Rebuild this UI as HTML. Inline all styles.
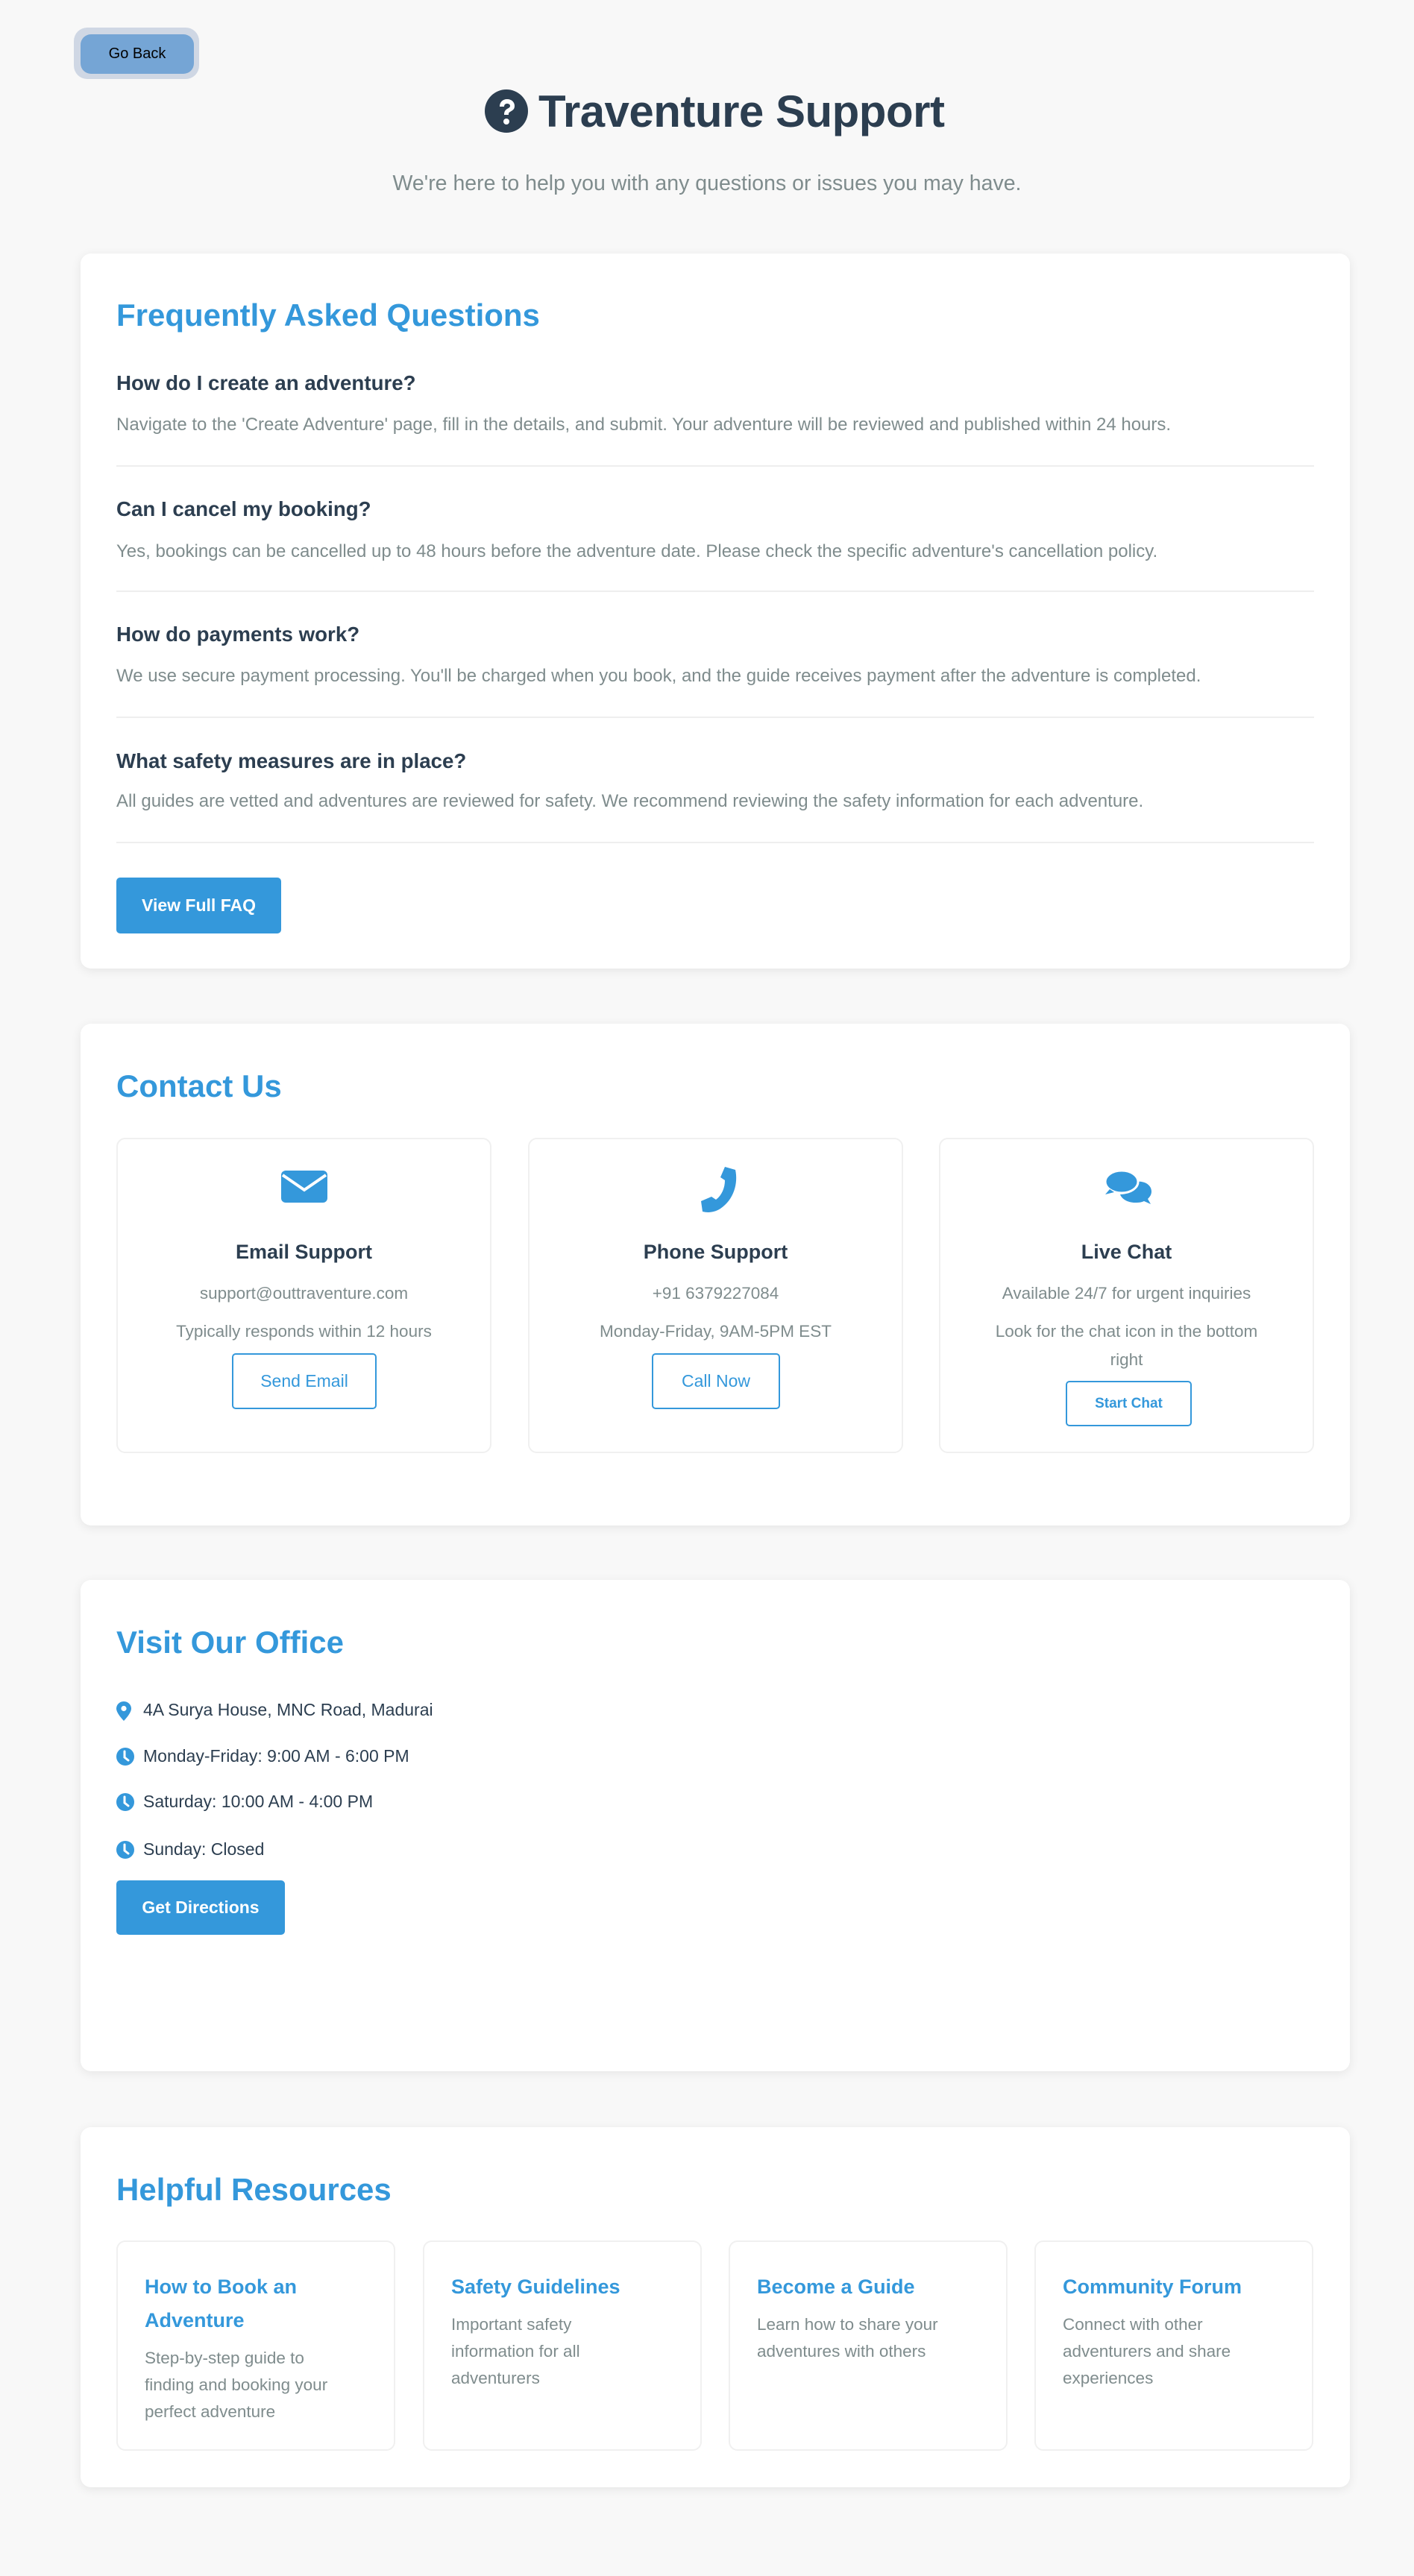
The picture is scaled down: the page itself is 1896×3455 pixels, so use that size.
<!DOCTYPE html>
<html><head><meta charset="utf-8">
<style>
*{margin:0;padding:0;box-sizing:border-box}
body{width:1896px;height:3455px;background:#f8f8f8;font-family:"Liberation Sans",Arial,sans-serif;position:relative;overflow:hidden}
.a{position:absolute;white-space:nowrap}
.card{position:absolute;left:108px;width:1702px;background:#fff;border-radius:14px;box-shadow:0 3px 14px rgba(0,0,0,0.08)}
.h2{position:absolute;left:156px;color:#3498db;font-weight:bold;font-size:42px;line-height:50px}
.q{position:absolute;left:156px;color:#2c3e50;font-weight:bold;font-size:27.7px;line-height:34px}
.ans{position:absolute;left:156px;color:#7f8c8d;font-size:24px;line-height:30px;white-space:nowrap}
.div{position:absolute;left:156px;width:1606px;height:2px;background:#eeeeee}
.btn{position:absolute;background:#3498db;color:#fff;font-weight:bold;border-radius:5px;text-align:center}
.cc{position:absolute;top:1526px;width:503px;height:423px;border:2px solid #f0f0f0;border-radius:12px;background:#fff}
.ct{position:absolute;left:0;width:100%;text-align:center}
.obtn{position:absolute;border:2px solid #3498db;border-radius:5px;color:#3498db;text-align:center;background:#fff}
.rc{position:absolute;top:3005px;width:374px;height:282px;border:2px solid #f0f0f0;border-radius:12px;background:#fff}
.rt{position:absolute;left:36px;color:#3498db;font-weight:bold;font-size:27px;line-height:45px;white-space:nowrap}
.rd{position:absolute;left:36px;color:#7f8c8d;font-size:22.5px;line-height:36px;white-space:nowrap}
.li{position:absolute;left:156px;color:#2c3e50;font-size:23px;line-height:30px;white-space:nowrap}
.li svg{position:absolute;left:0;top:4px}
.li span{position:absolute;left:36px;top:0}
</style></head><body>

<div class="a" style="left:99px;top:37px;width:168px;height:69px;border-radius:18px;background:#cfd7e4"></div>
<div class="a" style="left:108px;top:46px;width:152px;height:53px;border-radius:14px;background:#75a5d5;color:#000;font-size:20px;line-height:53px;text-align:center">Go Back</div>

<svg class="a" style="left:650px;top:120px" width="58" height="58" viewBox="0 0 58 58"><circle cx="29" cy="29" r="29" fill="#2c3e50"/><path d="M20 23c0-6 4-10 10-10s10 4 10 9c0 5-3 6-6 8-2 1-2 2-2 4h-6c0-4 1-6 4-8 2-1 4-2 4-4s-2-3-4-3-4 1-4 4z" fill="#fff"/><circle cx="29" cy="43" r="4" fill="#fff"/></svg>
<div class="a" style="left:722px;top:115px;color:#2c3e50;font-weight:bold;font-size:60px;line-height:70px;letter-spacing:-0.5px">Traventure Support</div>
<div class="a" style="left:0;width:1896px;top:228px;text-align:center;color:#7f8c8d;font-size:28.5px;line-height:36px">We're here to help you with any questions or issues you may have.</div>

<!-- FAQ -->
<div class="card" style="top:340px;height:959px"></div>
<div class="h2" style="top:398px">Frequently Asked Questions</div>
<div class="q" style="top:497px">How do I create an adventure?</div>
<div class="ans" style="top:555px">Navigate to the 'Create Adventure' page, fill in the details, and submit. Your adventure will be reviewed and published within 24 hours.</div>
<div class="div" style="top:624px"></div>
<div class="q" style="top:666px">Can I cancel my booking?</div>
<div class="ans" style="top:725px">Yes, bookings can be cancelled up to 48 hours before the adventure date. Please check the specific adventure's cancellation policy.</div>
<div class="div" style="top:792px"></div>
<div class="q" style="top:834px">How do payments work?</div>
<div class="ans" style="top:892px">We use secure payment processing. You'll be charged when you book, and the guide receives payment after the adventure is completed.</div>
<div class="div" style="top:961px"></div>
<div class="q" style="top:1004px">What safety measures are in place?</div>
<div class="ans" style="top:1060px">All guides are vetted and adventures are reviewed for safety. We recommend reviewing the safety information for each adventure.</div>
<div class="div" style="top:1129px"></div>
<div class="btn" style="left:156px;top:1177px;width:221px;height:75px;font-size:23px;line-height:75px">View Full FAQ</div>

<!-- Contact -->
<div class="card" style="top:1373px;height:673px"></div>
<div class="h2" style="top:1432px">Contact Us</div>

<div class="cc" style="left:156px">
  <svg class="a" style="left:219px;top:42px" width="62" height="43" viewBox="0 0 62 43"><rect x="0" y="0" width="62" height="43" rx="6" fill="#3498db"/><path d="M2 6 L31 26 L60 6" fill="none" stroke="#fff" stroke-width="4"/></svg>
  <div class="ct" style="top:134px;color:#2c3e50;font-weight:bold;font-size:27px;line-height:34px">Email Support</div>
  <div class="ct" style="top:192px;color:#7f8c8d;font-size:22.5px;line-height:30px">support@outtraventure.com</div>
  <div class="ct" style="top:243px;color:#7f8c8d;font-size:22.5px;line-height:30px">Typically responds within 12 hours</div>
  <div class="obtn" style="left:153px;top:287px;width:194px;height:75px;font-size:23px;line-height:71px">Send Email</div>
</div>
<div class="cc" style="left:708px">
  <svg class="a" style="left:218px;top:35px" width="64" height="64" viewBox="0 0 64 64"><path d="M44 2 L58 6 C62 24 56 46 38 58 C30 63 22 64 14 62 L12 48 L26 42 L32 46 C40 40 44 30 44 20 L38 16 Z" fill="#3498db"/></svg>
  <div class="ct" style="top:134px;color:#2c3e50;font-weight:bold;font-size:27px;line-height:34px">Phone Support</div>
  <div class="ct" style="top:192px;color:#7f8c8d;font-size:22.5px;line-height:30px">+91 6379227084</div>
  <div class="ct" style="top:243px;color:#7f8c8d;font-size:22.5px;line-height:30px">Monday-Friday, 9AM-5PM EST</div>
  <div class="obtn" style="left:164px;top:287px;width:172px;height:75px;font-size:23px;line-height:71px">Call Now</div>
</div>
<div class="cc" style="left:1259px">
  <svg class="a" style="left:221px;top:41px" width="62" height="48" viewBox="0 0 62 48"><path d="M40 16 C52 14 62 20 62 29 C62 34 59 37 57 39 L61 46 L52 42 C48 44 44 44 40 44 C30 44 22 39 20 33 C32 33 42 26 40 16 Z" fill="#3498db"/><ellipse cx="22" cy="16" rx="22" ry="15" fill="#3498db" stroke="#fff" stroke-width="3"/><path d="M6 26 L0 33 L12 30 Z" fill="#3498db"/></svg>
  <div class="ct" style="top:134px;color:#2c3e50;font-weight:bold;font-size:27px;line-height:34px">Live Chat</div>
  <div class="ct" style="top:192px;color:#7f8c8d;font-size:22.5px;line-height:30px">Available 24/7 for urgent inquiries</div>
  <div class="ct" style="top:239px;color:#7f8c8d;font-size:22.5px;line-height:38px;white-space:normal">Look for the chat icon in the bottom<br>right</div>
  <div class="obtn" style="left:168px;top:324px;width:169px;height:61px;font-size:19px;line-height:57px;font-weight:bold">Start Chat</div>
</div>

<!-- Office -->
<div class="card" style="top:2119px;height:659px"></div>
<div class="h2" style="top:2178px">Visit Our Office</div>
<div class="li" style="top:2278px"><svg width="20" height="26" viewBox="0 0 20 26"><path d="M10 0C4.5 0 0 4.3 0 9.6 0 16 10 26 10 26S20 16 20 9.6C20 4.3 15.5 0 10 0z" fill="#3498db"/><circle cx="10" cy="9.5" r="3.6" fill="#fff"/></svg><span>4A Surya House, MNC Road, Madurai</span></div>
<div class="li" style="top:2340px"><svg width="24" height="24" viewBox="0 0 24 24"><circle cx="12" cy="12" r="12" fill="#3498db"/><path d="M11 5v8l5 4" fill="none" stroke="#fff" stroke-width="3" stroke-linecap="round"/></svg><span>Monday-Friday: 9:00 AM - 6:00 PM</span></div>
<div class="li" style="top:2401px"><svg width="24" height="24" viewBox="0 0 24 24"><circle cx="12" cy="12" r="12" fill="#3498db"/><path d="M11 5v8l5 4" fill="none" stroke="#fff" stroke-width="3" stroke-linecap="round"/></svg><span>Saturday: 10:00 AM - 4:00 PM</span></div>
<div class="li" style="top:2465px"><svg width="24" height="24" viewBox="0 0 24 24"><circle cx="12" cy="12" r="12" fill="#3498db"/><path d="M11 5v8l5 4" fill="none" stroke="#fff" stroke-width="3" stroke-linecap="round"/></svg><span>Sunday: Closed</span></div>
<div class="btn" style="left:156px;top:2522px;width:226px;height:73px;font-size:23px;line-height:73px">Get Directions</div>

<!-- Resources -->
<div class="card" style="top:2853px;height:483px"></div>
<div class="h2" style="top:2912px">Helpful Resources</div>
<div class="rc" style="left:156px">
  <div class="rt" style="top:38px">How to Book an<br>Adventure</div>
  <div class="rd" style="top:138px">Step-by-step guide to<br>finding and booking your<br>perfect adventure</div>
</div>
<div class="rc" style="left:567px">
  <div class="rt" style="top:38px">Safety Guidelines</div>
  <div class="rd" style="top:93px">Important safety<br>information for all<br>adventurers</div>
</div>
<div class="rc" style="left:977px">
  <div class="rt" style="top:38px">Become a Guide</div>
  <div class="rd" style="top:93px">Learn how to share your<br>adventures with others</div>
</div>
<div class="rc" style="left:1387px">
  <div class="rt" style="top:38px">Community Forum</div>
  <div class="rd" style="top:93px">Connect with other<br>adventurers and share<br>experiences</div>
</div>

</body></html>
